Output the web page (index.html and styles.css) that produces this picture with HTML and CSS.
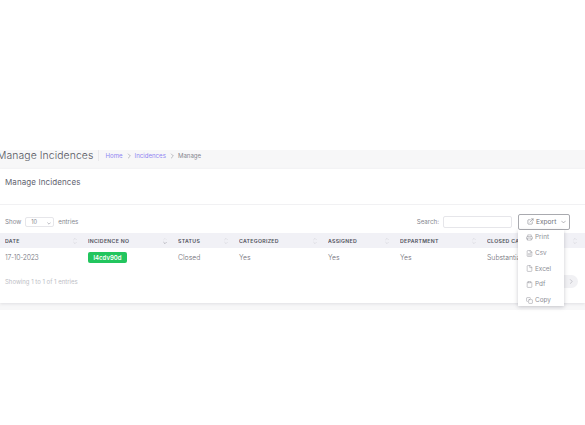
FILE: index.html
```html
<!DOCTYPE html>
<html lang="en">
<head>
    <meta charset="UTF-8">
    <title>Manage Incidences</title>
    <link rel="stylesheet" href="styles.css">
</head>
<body>
    <div class="page">
        <div class="page-header">
            <h1 class="page-title">Manage Incidences</h1>
            <div class="crumbs">
                <a>Home</a>
                <svg class="crumb-sep" viewBox="0 0 6 8"><path d="M2 1l3 3-3 3"/></svg>
                <a>Incidences</a>
                <svg class="crumb-sep" viewBox="0 0 6 8"><path d="M2 1l3 3-3 3"/></svg>
                <span>Manage</span>
            </div>
        </div>
        <div class="card">
            <div class="card-head">Manage Incidences</div>
            <div class="controls">
                <div class="length">
                    Show
                    <div class="select">10<svg viewBox="0 0 6 4"><path d="M1 1l2 2 2-2"/></svg></div>
                    entries
                </div>
                <div class="search">Search: <div class="search-box"></div></div>
                <div class="export-wrap">
                    <button class="export">
                        <svg class="ico" viewBox="0 0 24 24"><path d="M18 13v6a2 2 0 0 1-2 2H5a2 2 0 0 1-2-2V8a2 2 0 0 1 2-2h6"/><path d="M15 3h6v6"/><path d="M10 14L21 3"/></svg>
                        Export
                        <svg class="chev" viewBox="0 0 8 6"><path d="M1 1.5l3 3 3-3"/></svg>
                    </button>
                    <div class="menu">
                        <div class="menu-item"><svg class="ico" viewBox="0 0 24 24"><path d="M6 9V3h12v6"/><path d="M6 18H4a2 2 0 0 1-2-2v-5a2 2 0 0 1 2-2h16a2 2 0 0 1 2 2v5a2 2 0 0 1-2 2h-2"/><path d="M6 14h12v7H6z"/></svg>Print</div>
                        <div class="menu-item"><svg class="ico" viewBox="0 0 24 24"><path d="M14 2H6a2 2 0 0 0-2 2v16a2 2 0 0 0 2 2h12a2 2 0 0 0 2-2V8z"/><path d="M14 2v6h6"/><path d="M8 13h8M8 17h8"/></svg>Csv</div>
                        <div class="menu-item"><svg class="ico" viewBox="0 0 24 24"><path d="M13 2H6a2 2 0 0 0-2 2v16a2 2 0 0 0 2 2h12a2 2 0 0 0 2-2V9z"/><path d="M13 2v7h7"/></svg>Excel</div>
                        <div class="menu-item"><svg class="ico" viewBox="0 0 24 24"><path d="M16 4h2a2 2 0 0 1 2 2v14a2 2 0 0 1-2 2H6a2 2 0 0 1-2-2V6a2 2 0 0 1 2-2h2"/><path d="M8 2h8v4H8z"/></svg>Pdf</div>
                        <div class="menu-item"><svg class="ico" viewBox="0 0 24 24"><path d="M11 9h9a2 2 0 0 1 2 2v9a2 2 0 0 1-2 2h-9a2 2 0 0 1-2-2v-9a2 2 0 0 1 2-2z"/><path d="M5 15H4a2 2 0 0 1-2-2V4a2 2 0 0 1 2-2h9a2 2 0 0 1 2 2v1"/></svg>Copy</div>
                    </div>
                </div>
            </div>
            <table class="grid">
                <colgroup>
                    <col class="c1"><col class="c2"><col class="c3"><col class="c4"><col class="c5"><col class="c6"><col class="c7"><col class="c8">
                </colgroup>
                <thead>
                    <tr>
                        <th><div class="th">DATE<svg class="sort" viewBox="0 0 6 12"><path d="M1 4l2-2 2 2M1 8l2 2 2-2"/></svg></div></th>
                        <th><div class="th">INCIDENCE NO<svg class="sort sort-on" viewBox="0 0 6 12"><path class="off" d="M1 4l2-2 2 2"/><path d="M1 8l2 2 2-2"/></svg></div></th>
                        <th><div class="th">STATUS<svg class="sort" viewBox="0 0 6 12"><path d="M1 4l2-2 2 2M1 8l2 2 2-2"/></svg></div></th>
                        <th><div class="th">CATEGORIZED<svg class="sort" viewBox="0 0 6 12"><path d="M1 4l2-2 2 2M1 8l2 2 2-2"/></svg></div></th>
                        <th><div class="th">ASSIGNED<svg class="sort" viewBox="0 0 6 12"><path d="M1 4l2-2 2 2M1 8l2 2 2-2"/></svg></div></th>
                        <th><div class="th">DEPARTMENT<svg class="sort" viewBox="0 0 6 12"><path d="M1 4l2-2 2 2M1 8l2 2 2-2"/></svg></div></th>
                        <th><div class="th">CLOSED CATEGORY<svg class="sort" viewBox="0 0 6 12"><path d="M1 4l2-2 2 2M1 8l2 2 2-2"/></svg></div></th>
                        <th></th>
                    </tr>
                </thead>
                <tbody>
                    <tr>
                        <td class="date-cell">17-10-2023</td>
                        <td><span class="badge">l4cdv90d</span></td>
                        <td>Closed</td>
                        <td>Yes</td>
                        <td>Yes</td>
                        <td>Yes</td>
                        <td>Substantiated</td>
                        <td></td>
                    </tr>
                </tbody>
            </table>
            <div class="foot">
                <div class="info">Showing 1 to 1 of 1 entries</div>
                <div class="next"><svg viewBox="0 0 6 8"><path d="M2 1l3 3-3 3"/></svg></div>
            </div>
        </div>
    </div>
</body>
</html>
```

FILE: styles.css
```css
html, body {
    margin: 0;
    height: 100%;
    overflow: hidden;
    background: #fff;
}

body {
    font-family: Inter, "Open Sans", sans-serif;
    color: #6f7079;
}

svg {
    fill: none;
    stroke: currentColor;
    stroke-linecap: round;
    stroke-linejoin: round;
}

.page {
    margin-top: 150px;
    padding-bottom: 7px;
    background: #f7f7f8;
}

.page-header {
    display: flex;
    align-items: flex-start;
    height: 19px;
    margin-left: -3px;
}

.page-title {
    margin: 0;
    padding: 0 5px 0 0;
    height: 11px;
    border-right: 1px solid #e8e8eb;
    font-size: 10.4px;
    line-height: 11px;
    font-weight: 300;
    letter-spacing: 0.1px;
    color: #55565f;
}

.crumbs {
    display: flex;
    align-items: center;
    gap: 4px;
    height: 11px;
    margin-left: 6px;
    font-size: 6.1px;
    color: #8f84f2;
}

.crumbs span {
    color: #85868f;
}

.crumb-sep {
    width: 4px;
    height: 6px;
    color: #85868f;
    stroke-width: 0.8;
}

.card {
    height: 134px;
    background: #fff;
    box-shadow: 0 1px 3px rgba(120, 120, 135, 0.18);
}

.card-head {
    height: 36px;
    padding: 8px 5px 0;
    box-sizing: border-box;
    border-bottom: 1px solid #f1f1f3;
    font-size: 8px;
    line-height: 11px;
    letter-spacing: 0.1px;
    color: #62636f;
}

.controls {
    display: flex;
    align-items: center;
    height: 28px;
    padding: 5px 15px 0 5px;
    box-sizing: border-box;
    font-size: 6.2px;
    color: #85868f;
}

.length {
    display: flex;
    align-items: center;
    gap: 4px;
}

.select {
    display: flex;
    align-items: center;
    justify-content: space-between;
    width: 29px;
    height: 10px;
    padding: 0 2px 0 5px;
    box-sizing: border-box;
    border: 1px solid #e6e6ea;
    border-radius: 2px;
    font-size: 5.6px;
}

.select svg {
    width: 4px;
    height: 3px;
    margin-top: 3px;
    stroke-width: 0.8;
}

.search {
    display: flex;
    align-items: center;
    gap: 4px;
    margin-left: auto;
}

.search-box {
    width: 69px;
    height: 12px;
    box-sizing: border-box;
    border: 1px solid #e6e6ea;
    border-radius: 2px;
}

.export-wrap {
    position: relative;
    margin-left: 6px;
}

.export {
    display: flex;
    align-items: center;
    width: 52px;
    height: 16px;
    padding: 0 0 0 8px;
    box-sizing: border-box;
    border: 1px solid #a9aaaf;
    border-radius: 2px;
    background: #fff;
    font: inherit;
    font-size: 6.6px;
    color: #6f7079;
}

.ico {
    flex: none;
    width: 7px;
    height: 7px;
    margin-right: 2px;
    stroke-width: 1.7;
}

.chev {
    width: 5px;
    height: 4px;
    margin-left: 5px;
    stroke-width: 0.8;
}

.menu {
    position: absolute;
    top: 16px;
    left: 0;
    z-index: 2;
    width: 46px;
    height: 76px;
    box-sizing: border-box;
    background: #fff;
    box-shadow: 0 1px 4px rgba(100, 100, 115, 0.35);
}

.menu-item {
    display: flex;
    align-items: center;
    height: 15.7px;
    padding-left: 8px;
    font-size: 6.4px;
    color: #8e8f97;
}

.grid {
    width: 640px;
    table-layout: fixed;
    border-collapse: collapse;
}

.c1 { width: 83px; }
.c2 { width: 90px; }
.c3 { width: 61px; }
.c4 { width: 89px; }
.c5 { width: 72px; }
.c6 { width: 87px; }
.c7 { width: 101px; }

.grid th {
    height: 15px;
    padding: 0 6px 0 5px;
    background: #f1f1f6;
    font-size: 5.2px;
    font-weight: 600;
    letter-spacing: 0.3px;
    text-align: left;
    color: #4f505a;
    white-space: nowrap;
}

.th {
    display: flex;
    align-items: center;
    justify-content: space-between;
    overflow: hidden;
}

.sort {
    flex: none;
    width: 4px;
    height: 8px;
    color: #cbccd2;
    stroke-width: 0.7;
}

.sort-on {
    color: #7d7e88;
}

.sort-on .off {
    stroke: #d8d9dd;
}

.grid td {
    height: 19px;
    padding: 0 5px;
    box-sizing: border-box;
    font-size: 6.9px;
    font-weight: 300;
    color: #6f7079;
    white-space: nowrap;
    overflow: hidden;
}

.grid .date-cell {
    letter-spacing: -0.3px;
}

.badge {
    display: inline-block;
    width: 39px;
    height: 11px;
    line-height: 11px;
    border-radius: 2px;
    background: #22c55e;
    font-size: 6px;
    font-weight: 600;
    text-align: center;
    color: #fff;
}

.foot {
    display: flex;
    align-items: center;
    justify-content: space-between;
    padding: 8px 7px 0 5px;
    font-size: 6px;
    color: #bdbec5;
}

.next {
    display: flex;
    align-items: center;
    justify-content: center;
    width: 22px;
    height: 13px;
    border-radius: 7px;
    background: #f1f1f4;
    color: #9c9da6;
}

.next svg {
    width: 4px;
    height: 5px;
    margin-left: 8px;
    stroke-width: 0.8;
}
```
